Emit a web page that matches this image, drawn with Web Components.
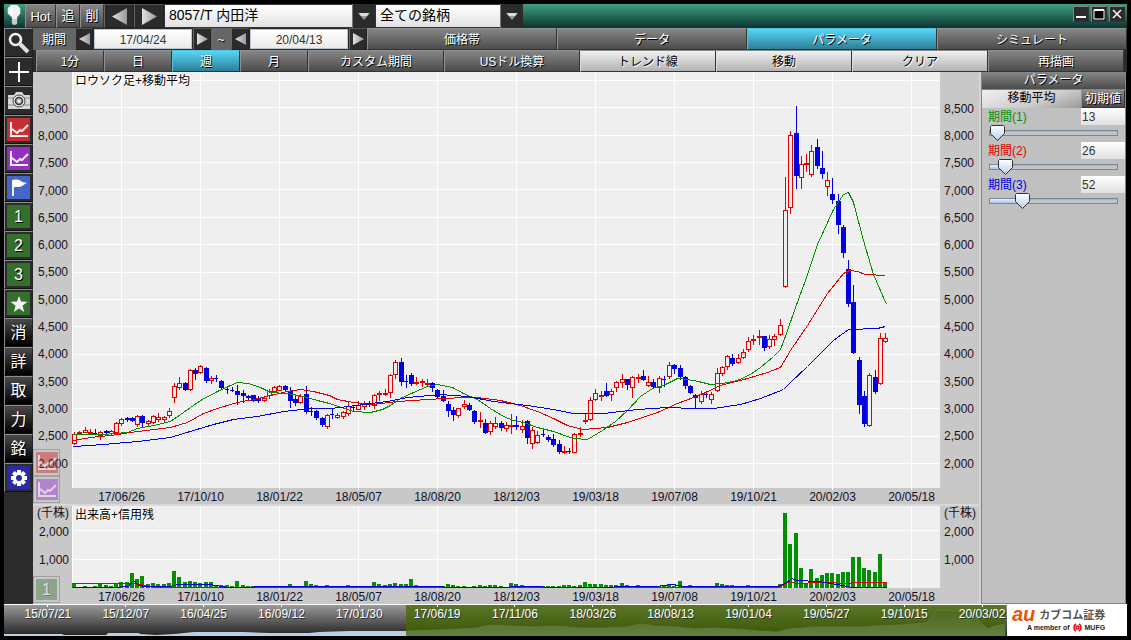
<!DOCTYPE html>
<html lang="ja">
<head>
<meta charset="utf-8">
<title>8057/T 内田洋</title>
<style>
  body {
    margin: 0;
    background: #000;
    font: 12px/16px "Liberation Sans", "Noto Sans CJK JP", sans-serif;
  }
</style>
</head>
<body>
<trade-app></trade-app>

<script>
// Small helper: every element gets an open shadow root with its own styles
const define = (name, render, setup) => {
  customElements.define(
    name,
    class extends HTMLElement {
      connectedCallback() {
        if (this.shadowRoot) return;
        this.attachShadow({ mode: "open" });
        this.shadowRoot.innerHTML = render(this);
        if (setup) setup(this, this.shadowRoot);
      }
    }
  );
};

const ICONS = {
  bulb: `<path d="M6 1h6l3 3v5l-3 4v2H7v-2L3 9V4z" fill="#f2f2ee"/><path d="M5 4l3-2v6l-2 2z" fill="#fff"/><path d="M7 15h5v3l-1 2H8l-1-2z" fill="#a9a9a4"/><path d="M7 16h5M7 18h5" stroke="#e6e6e0"/>`,
  search: `<circle cx="7.500" cy="7.500" r="5.500" fill="none" stroke="#f2f2f2" stroke-width="2.600"/><path d="M12 12l8 8" stroke="#ddd" stroke-width="4"/>`,
  plus: `<path d="M11 1v20M1 11h20" stroke="#fff" stroke-width="2"/>`,
  camera: `<path d="M0 5h6l2-3h6l2 3h6v14H0z" fill="#d8d8d8"/><path d="M0 8h22M0 15h22" stroke="#8a8a8a"/><circle cx="11" cy="11" r="6" fill="#eee" stroke="#444"/><circle cx="11" cy="11" r="3.500" fill="#bbb" stroke="#333" stroke-width="1.500"/><circle cx="11" cy="11" r="1.500" fill="#eee"/>`,
  chart: `<path d="M3 3v14h17" fill="none" stroke="#f4f0f0" stroke-width="2"/><path d="M4 10l5 4 3-3 2 1 6-6" fill="none" stroke="#f4f0f0" stroke-width="2"/>`,
  flag: `<path d="M5 3v16" stroke="#eee" stroke-width="2"/><path d="M5 3c4-1 8 0 9 2l5 1c-3 1-5 4-8 4H5z" fill="#fff"/>`,
  star: `<path d="M11 3l2 5.500 6.500.2-5 4 1.700 6.300L11 15.500 5.800 19l1.700-6.300-5-4 6.500-.2z" fill="#f2f2f2"/>`,
  gear: `<g stroke="#fff" stroke-width="4"><path d="M11 3v16M3 11h16M5.400 5.400l11.200 11.200M16.600 5.400L5.400 16.600"/></g><circle cx="11" cy="11" r="6" fill="#fff"/><circle cx="11" cy="11" r="3" fill="#2a2aa8"/>`,
};

// --- controls ---------------------------------------------------------

define("tool-button", (el) => {
  const icon = el.getAttribute("icon");
  return `
  <style>
    :host { display: block; width: 29px; height: 29px; box-sizing: border-box; }
    button {
      width: 100%; height: 100%; padding: 2px; box-sizing: border-box;
      display: flex; align-items: stretch; justify-content: stretch;
      background: #2b2b2b; color: #fff; cursor: pointer;
      border: 1px solid; border-color: #8d8d8d #222 #111 #8d8d8d;
      font: inherit; font-size: 16px;
    }
    span {
      flex: 1; display: flex; align-items: center; justify-content: center;
      background: var(--tile, transparent); text-shadow: 1px 1px #000;
    }
    :host([kanji]) button { background: linear-gradient(#4a4a4a, #000); }
    :host([ghost]) { width: 27px; height: 27px; opacity: .4; }
    :host([ghost]) button { background: #c8c8c8; border-color: #666; }
    svg { width: 22px; height: 22px; flex: none; }
  </style>
  <button type="button" aria-label="${el.getAttribute("label") || el.textContent}"><span>${
    icon ? `<svg viewBox="0 0 22 22" aria-hidden="true">${ICONS[icon]}</svg>` : "<slot></slot>"
  }</span></button>`;
});

define("bar-button", () => `
  <style>
    :host { display: flex; min-width: 0; }
    button {
      flex: 1; padding: 2px 0 0; min-width: 0; cursor: pointer; white-space: nowrap;
      background: linear-gradient(#868686, #4c4c4c); color: #fff;
      border: 1px solid; border-color: #919191 #333 #333 #919191;
      font: inherit; text-shadow: 1px 1px #000;
    }
    :host([active]) button { background: linear-gradient(#56d6f7, #2d7f96); border-color: #56c4e0 #333 #333 #56c4e0; }
    :host([light]) button { background: linear-gradient(#f0f0f0, #b2b2b2); color: #000; text-shadow: 1px 1px #fff; border-color: #888 #333 #333 #ddd; }
    :host([large]) button { font-size: 13px; }
    :host([flat]) button { padding: 0; }
  </style>
  <button type="button"><slot></slot></button>`);

define("arrow-button", (el) => {
  const right = el.getAttribute("dir") === "right";
  return `
  <style>
    :host { display: flex; width: 18px; }
    :host([large]) { width: 30px; }
    button { flex: 1; padding: 0; background: #2b2b2b; border: 1px solid; border-color: #555 #222 #222 #666; cursor: pointer; display: flex; align-items: center; justify-content: center; }
    svg { width: 11px; height: 12px; }
    :host([large]) svg { width: 15px; height: 17px; }
  </style>
  <button type="button" aria-label="${right ? "次へ" : "前へ"}">
    <svg viewBox="0 0 10 12" preserveAspectRatio="none" aria-hidden="true">
      <defs><linearGradient id="g"><stop stop-color="#e2e2e2"/><stop offset="1" stop-color="#999"/></linearGradient></defs>
      <path d="${right ? "M0 0l10 6-10 6z" : "M10 0L0 6l10 6z"}" fill="url(#g)"/>
    </svg>
  </button>`;
});

define("combo-box", (el) => `
  <style>
    :host { display: grid; }
    select, i { grid-area: 1 / 1; }
    select {
      appearance: none; width: 100%; margin: 0; padding: 0 24px 2px 4px; cursor: pointer;
      background: linear-gradient(#fff, #e2e2e2); color: #000; border: 1px solid #333; border-radius: 0;
      font: inherit; font-size: 14px;
    }
    i { justify-self: end; width: 23px; display: flex; align-items: center; justify-content: center; background: #2b2b2b; border-left: 1px solid #777; box-sizing: border-box; pointer-events: none; }
    svg { width: 12px; height: 7px; }
  </style>
  <select aria-label="${el.getAttribute("label")}"><option>${el.getAttribute("value")}</option></select>
  <i><svg viewBox="0 0 12 7" aria-hidden="true"><path d="M0 0h12L6 7z" fill="#999"/><path d="M1 0h10L9 3H3z" fill="#ddd"/></svg></i>`);

define("date-stepper", (el) => `
  <style>
    :host { display: flex; background: #2b2b2b; }
    input {
      width: 98px; box-sizing: border-box; margin: 1px; padding: 1px 0 0; text-align: center;
      font: inherit; color: #333; background: linear-gradient(#fff, #eaeaea);
      border: 1px solid; border-color: #fff #7d8ea3 #7d8ea3 #fff;
      outline: 1px solid #b8c4d0; outline-offset: -1px;
    }
  </style>
  <arrow-button dir="left"></arrow-button>
  <input type="text" aria-label="${el.getAttribute("label")}" value="${el.getAttribute("value")}">
  <arrow-button dir="right"></arrow-button>`);

define("window-controls", () => `
  <style>
    :host { display: flex; gap: 2px; padding: 2px 2px 0 0; align-items: flex-start; }
    button { width: 16px; height: 16px; padding: 0; background: #2b2b2b; border: 1px solid; border-color: #888 #333 #333 #888; display: flex; }
    svg { width: 14px; height: 14px; }
  </style>
  <button type="button" aria-label="最小化"><svg viewBox="0 0 14 14"><path d="M2 10h10" stroke="#fff" stroke-width="2"/></svg></button>
  <button type="button" aria-label="最大化"><svg viewBox="0 0 14 14"><path d="M2 3h10v9H2z" fill="#000" stroke="#fff"/><path d="M2 3h10" stroke="#fff" stroke-width="2"/></svg></button>
  <button type="button" aria-label="閉じる"><svg viewBox="0 0 14 14"><path d="M3 3l8 8M11 3l-8 8" stroke="#fff" stroke-width="1.500"/></svg></button>`);

define("period-slider", (el) => `
  <style>
    :host { display: grid; grid-template-columns: 1fr 44px; grid-template-rows: 17px 17px; }
    label { padding-left: 6px; color: var(--tone); line-height: 18px; }
    input { margin: 0; min-width: 0; box-sizing: border-box; }
    input[type=text] { border: 0; padding: 0 1px; font: inherit; color: #333; background: linear-gradient(#fff, #e0e0e0); }
    input[type=range] {
      appearance: none; grid-column: 1 / 3; width: 100%; height: 16px;
      background:
        linear-gradient(#e6f0fa, #a9c4e2) 8px 6px / var(--fill) 4px no-repeat,
        linear-gradient(#a8b4c0 1px, #c4c4c4 1px) center 6px / calc(100% - 16px) 4px no-repeat,
        linear-gradient(#74879b, #74879b) center 5px / calc(100% - 14px) 6px no-repeat;
    }
    input[type=range]::-webkit-slider-thumb {
      appearance: none; width: 15px; height: 16px;
      background: url("data:image/svg+xml,%3Csvg xmlns='http://www.w3.org/2000/svg' viewBox='0 0 15 16'%3E%3ClinearGradient id='g' x2='0' y2='1'%3E%3Cstop stop-color='%23fff'/%3E%3Cstop offset='1' stop-color='%23b4d0ec'/%3E%3C/linearGradient%3E%3Cpath d='M.5 1.500l1-1h12l1 1v7l-7 7-7-7z' fill='url(%23g)' stroke='%23333'/%3E%3C/svg%3E") no-repeat;
    }
  </style>
  <label for="n"><slot></slot></label>
  <input id="n" type="text">
  <input id="r" type="range" min="1" max="200" aria-label="スライダー">`,
(el, root) => {
  const text = root.getElementById("n");
  const range = root.getElementById("r");
  const sync = (v) => {
    text.value = v;
    range.value = v;
    range.style.setProperty("--fill", `${Math.round(v / 2)}%`);
  };
  el.style.setProperty("--tone", el.getAttribute("tone"));
  sync(el.getAttribute("value"));
  range.addEventListener("input", () => sync(range.value));
  text.addEventListener("change", () => sync(text.value));
});

// --- chart data, in plot units -----------------------------------------

// one week each: colour, high, body top, body bottom, low
const CANDLES = `r360 362 371 372,r359 360 361 362,r355 358 360 360,r357 360 361 361,b357 361 361 361,r359 360 363 367,b358 359 360 362,r358 359 361 362,r350 351 360 360,r346 347 351 353,
b345 346 347 349,b345 346 348 349,r343 344 352 354,b343 344 350 354,r348 349 351 353,r343 344 350 351,r341 345 347 349,r344 345 347 349,r336 339 343 345,r311 314 325 330,
r305 311 315 317,b310 311 317 318,r297 298 317 318,b296 298 301 307,r293 294 300 301,b295 296 308 310,r304 306 308 311,b303 306 306 309,b308 309 315 316,b314 317 317 321,
b315 318 318 319,b313 319 322 332,b318 321 323 330,b323 324 325 328,b323 323 328 329,b324 326 328 330,r324 326 328 329,r317 319 323 326,r314 315 319 320,r313 314 318 318,
b313 314 317 319,b315 319 328 335,b324 327 330 333,r322 324 330 331,b314 322 339 341,b335 339 339 343,b338 339 345 347,b345 346 352 354,r342 343 354 356,b336 342 342 346,
r341 343 345 346,r339 340 344 346,r329 334 341 343,b333 335 335 338,r329 333 337 337,r329 332 334 337,b329 331 332 334,r322 323 333 336,r319 321 322 328,r317 321 322 323,
r302 303 320 325,r288 290 302 306,b286 290 309 313,b303 309 309 315,b301 303 311 313,r305 310 311 312,r307 309 310 314,r307 311 312 313,b310 311 315 319,b317 318 324 326,
b318 324 328 329,b329 332 338 344,b335 338 342 348,r336 336 343 345,r328 332 334 336,b331 333 337 338,b338 339 349 351,r340 348 349 355,b347 351 360 361,r349 351 359 362,
r345 351 354 356,b349 351 355 358,r350 353 356 359,r342 353 354 361,b344 353 354 357,r348 354 357 360,b348 349 365 371,r355 358 371 376,r359 363 370 371,b356 362 362 364,
b363 365 367 369,b362 367 372 374,b368 372 379 381,r374 379 380 381,b376 379 379 381,r361 362 380 380,r355 361 362 364,r341 348 349 351,r325 328 347 348,r317 321 327 328,
r319 323 324 328,b311 319 323 324,r317 319 322 328,r309 310 315 319,r302 307 310 315,b307 307 312 317,r304 305 315 325,r302 305 306 310,b298 304 307 308,r304 310 313 314,
b307 310 314 316,r304 306 315 320,b304 307 307 314,r290 293 304 306,b292 293 296 301,b293 296 304 307,b304 305 313 316,b313 314 320 321,b322 323 325 335,r319 322 329 331,
b319 322 322 325,r320 322 327 331,r296 301 318 319,r294 295 301 303,r283 284 294 297,b282 286 291 293,r282 286 290 291,r277 280 285 286,r265 269 277 279,r263 267 268 272,
r258 264 265 272,b264 264 275 278,r263 267 274 276,r262 264 267 273,r247 253 262 263,r105 138 214 215,r59 63 135 141,b34 61 103 116,r84 92 105 116,r82 91 92 99,
r73 79 102 104,b67 75 93 96,b79 96 101 106,r100 108 114 123,b106 122 127 131,b122 129 152 161,b153 155 180 185,b188 197 231 234,b213 230 280 281,b285 288 332 341,
b319 324 351 354,r301 303 353 354,b298 305 319 321,r261 266 311 312,r261 266 269 270`
  .split(/,\s*/)
  .map((s) => [s[0], ...s.slice(1).split(" ").map(Number)]);

const AVERAGES = [
  ["#009000", "1,362 31,362 55,360 65,356 81,353 98,349 111,340 128,328 145,319 156,314 165,310 176,311 188,315 198,320 215,321 231,324 245,328 257,331 275,337 281,339 298,340 310,337 318,333 328,326 341,320 355,314 365,312 380,315 391,321 405,327 418,336 431,344 441,348 451,350 465,355 481,359 495,364 501,366 515,367 530,358 543,349 555,338 568,324 580,316 593,312 605,306 615,307 626,309 638,312 650,311 665,308 678,302 688,295 701,284 708,277 714,261 723,235 733,208 745,172 761,137 771,122 776,120 781,130 791,168 801,202 814,232"],
  ["#e00000", "1,368 18,365 38,363 65,359 98,355 115,350 131,341 148,335 165,330 181,327 198,323 215,319 228,317 241,319 257,323 265,327 281,330 301,332 325,329 355,327 391,325 405,325 428,328 448,333 465,339 481,346 495,353 510,357 535,355 555,350 585,340 605,331 621,325 631,321 648,313 675,306 695,300 708,295 718,278 735,253 755,221 771,201 777,198 785,199 793,202 813,203"],
  ["#0000e0", "1,374 31,372 65,369 98,365 121,358 141,352 161,347 185,344 211,339 238,336 257,336 268,335 291,332 315,329 335,325 368,322 395,324 421,329 455,333 481,337 501,341 531,341 565,337 595,335 621,336 641,336 668,332 688,326 711,317 718,310 735,294 761,268 776,257 805,256 813,254"],
];

const VOLUMES = [
  5, 1, 2, 1, 2, 4, 3, 2, 4, 6, 6, 15, 9, 12, 4, 5, 4, 4, 5, 17, 11, 6, 7, 6, 5, 6, 6, 3, 3, 3, 2, 7, 3, 2, 2, 1, 1, 2, 2, 2,
  2, 4, 2, 1, 7, 4, 3, 2, 3, 2, 2, 2, 3, 1, 2, 2, 2, 6, 4, 3, 4, 5, 4, 4, 9, 3, 2, 2, 1, 1, 2, 4, 3, 2, 2, 1, 2, 3, 2, 3,
  3, 2, 1, 5, 4, 3, 2, 1, 1, 2, 2, 2, 2, 3, 3, 2, 3, 6, 4, 4, 4, 3, 3, 3, 5, 3, 2, 3, 2, 2, 2, 2, 3, 4, 2, 7, 2, 3, 2, 1,
  2, 1, 5, 4, 3, 3, 2, 2, 3, 2, 2, 2, 2, 2, 4, 75, 44, 55, 20, 5, 19, 10, 13, 15, 15, 14, 16, 16, 31, 31, 20, 18, 16, 34, 6,
];

const CREDIT = [
  ["#e00000", "0,77 64,77 72,79 84,81 667,81 706,81 711,78 718,75 723,77 748,76 778,77 780,76 814,76"],
  ["#0000e0", "0,81 42,81 56,80 61,74 66,79 74,80 97,80 106,78 137,78 150,80 154,81 180,81 184,80 370,80 372,81 435,81 440,80 500,81 584,80 600,78 612,80 700,80 706,80 713,77 719,72 725,74 746,75 765,78 780,81 814,81"],
];

const weekX = (i) => 2 + Math.round((i * 79) / 15);
const rect = (x, y, w, h, fill) => `<rect x="${x}" y="${y}" width="${w}" height="${h}" fill="${fill}"/>`;
const lines = (list) =>
  list
    .map(([color, pts]) => `<polyline points="${pts}" transform="translate(.5 .5)" fill="none" stroke="${color}"/>`)
    .join("");

function gridLines(height, ys) {
  let out = rect(0, 0, 868, height, "#efefef") + rect(0, 0, 1, height, "#fff");
  for (let i = 0; i < 11; i++) out += rect(49 + i * 79, 0, 1, height, "#fff");
  return out + ys.map((y) => rect(0, y, 868, 1, "#fff")).join("");
}

function drawCandles() {
  const ys = Array.from({ length: 15 }, (_, i) => 391 - Math.round(i * 27.350));
  const body = CANDLES.map(([type, high, top, bottom, low], i) => {
    const x = weekX(i);
    const color = type === "r" ? "#e00000" : "#0000e0";
    const h = bottom - top + 1;
    let out = rect(x, high, 1, low - high + 1, color);
    out += rect(x - 2, top, type === "r" ? 5 : 4 + (h > 1), h, color);
    if (type === "r" && h > 2) out += rect(x - 1, top + 1, 3, h - 2, "#efefef");
    return out;
  }).join("");
  return gridLines(416, ys) + body + lines(AVERAGES);
}

function drawVolumes() {
  const bars = VOLUMES.map((v, i) => rect(weekX(i) - 2, 82 - v, 4, v, "#009000")).join("");
  return gridLines(82, [24, 53]) + bars + lines(CREDIT);
}

// --- chart pane: two price axes, a plot and the date axis ---------------

define("chart-pane", (el) => {
  const volume = el.hasAttribute("volume");
  const prices = volume ? ["(千株)", "2,000", "1,000"] : Array.from({ length: 14 }, (_, i) => (8500 - i * 500).toLocaleString("en-US"));
  const rows = volume ? "13fr 25fr 31fr 13fr" : "230fr repeat(14, 273fr) 108fr";
  const axis = (volume ? "" : "<b></b>") + prices.map((p) => `<span>${p}</span>`).join("");
  const dates = ["17/06/26", "17/10/10", "18/01/22", "18/05/07", "18/08/20", "18/12/03", "19/03/18", "19/07/08", "19/10/21", "20/02/03", "20/05/18"];
  return `
  <style>
    :host { position: relative; display: grid; grid-template: minmax(0, 1fr) 16px / 39px minmax(0, 1fr) 39px; background: #c8c8c8; color: #201018; min-height: 0; }
    .axis { display: grid; grid-template-rows: ${rows}; align-items: center; padding: 0 4px; white-space: nowrap; min-height: 0; }
    .axis span { height: 0; line-height: 0; }
    .left { justify-items: end; }
    .plot { display: grid; min-height: 0; overflow: hidden; }
    .plot > * { grid-area: 1 / 1; }
    svg { width: 100%; height: 100%; min-height: 0; shape-rendering: crispEdges; }
    h2 { margin: 0; padding-left: 3px; align-self: start; color: #000; font: inherit; line-height: 18px; text-shadow: 1px 1px #fff, -1px 0 #fff; z-index: 1; }
    .dates { grid-column: 1 / 4; display: grid; grid-template-columns: repeat(11, 1fr); padding: 0 28px 0 49px; text-align: center; line-height: 19px; color: #101028; }
    .dates span { background: linear-gradient(#fff, #fff) center top / 1px 2px no-repeat; height: 16px; }
    .tools { position: absolute; left: 0; bottom: 1px; }
    :host(:not([volume])) { border-bottom: 2px solid #d8d8d8; }
  </style>
  <div class="axis left">${axis}</div>
  <div class="plot">
    <svg viewBox="0 0 868 ${volume ? 82 : 416}" preserveAspectRatio="none" aria-hidden="true">${volume ? drawVolumes() : drawCandles()}</svg>
    <h2>${el.getAttribute("heading")}</h2>
  </div>
  <div class="axis">${axis}</div>
  <div class="dates">${dates.map((d) => `<span>${d}</span>`).join("")}</div>
  <div class="tools"><slot></slot></div>`;
});

// --- history strip under the charts -------------------------------------

define("history-strip", () => {
  const dates = ["15/07/21", "15/12/07", "16/04/25", "16/09/12", "17/01/30", "17/06/19", "17/11/06", "18/03/26", "18/08/13", "19/01/04", "19/05/27", "19/10/15", "20/03/02"];
  const history = "0,29 58,29 60,30 102,30 104,28 134,28 137,29 152,30 170,29 190,27 240,27 265,28 305,28 315,27 345,26 402,26";
  const selected = "402,26 435,25 473,23 480,21 492,20 506,21 530,22 552,21 576,23 602,23 623,22 638,19 649,21 673,22 690,24 711,23 730,24 756,26 773,27 784,24 810,22 860,22 870,21 896,20 922,18 928,12 933,5 953,6 970,9 976,18 984,24 991,21 1001,19";
  return `
  <style>
    :host { display: grid; overflow: hidden; background: linear-gradient(#9a9a9a, #222); border-top: 1px solid #fff; box-sizing: border-box; color: #fff; }
    svg, div { grid-area: 1 / 1; }
    svg { width: 100%; height: 31px; }
    div { display: grid; grid-template-columns: repeat(13, 1fr); margin-right: -14px; padding-left: 5px; text-align: center; line-height: 19px; z-index: 1; }
    span { background: linear-gradient(#fff, #fff) center top / 1px 2px no-repeat; text-shadow: 1px 1px #333; }
  </style>
  <svg viewBox="0 0 1003 31" preserveAspectRatio="none" aria-hidden="true">
    <defs><linearGradient id="sel" x2="0" y2="1"><stop stop-color="#5b7627"/><stop offset="1" stop-color="#3a5608"/></linearGradient>
    <linearGradient id="area" x2="0" y2="1"><stop stop-color="#4c681b"/><stop offset="1" stop-color="#638040"/></linearGradient></defs>
    <polygon points="${history} 402,31 0,31" fill="#b9cfe4"/>
    <rect x="402" y="0" width="600" height="31" fill="url(#sel)"/>
    <polygon points="${selected} 1001,31 402,31" fill="url(#area)"/>
    <polyline points="${selected}" fill="none" stroke="#6a8440" stroke-opacity=".6"/>
  </svg>
  <div>${dates.map((d) => `<span>${d}</span>`).join("")}</div>`;
});

define("broker-logo", () => `
  <style>
    :host { display: flex; flex-direction: column; justify-content: center; width: 120px; background: #fff; color: #555; }
    p { margin: 0; display: flex; align-items: center; white-space: nowrap; }
    .brand { padding-left: 5px; gap: 4px; font-size: 11px; line-height: 16px; height: 15px; font-weight: bold; }
    .brand em { color: #eb5505; font-size: 20px; font-style: italic; line-height: 14px; padding-bottom: 3px; }
    .group { padding-left: 20px; gap: 2px; font-size: 7px; line-height: 10px; font-weight: bold; color: #222; }
    svg { width: 11px; height: 9px; flex: none; }
  </style>
  <p class="brand"><em>au</em>カブコム証券</p>
  <p class="group">A member of
    <svg viewBox="0 0 11 9" aria-hidden="true"><path d="M4 1a4 4 0 0 0 0 7M7 1a4 4 0 0 1 0 7" fill="none" stroke="#e60012" stroke-width="1.500"/><circle cx="5.500" cy="4.500" r="1.500" fill="none" stroke="#e60012" stroke-width="1.500"/></svg>
    MUFG</p>`);

// --- page ----------------------------------------------------------------

define("trade-app", () => `
  <style>
    :host { display: grid; grid-template: 24px 22px 22px minmax(0, 1fr) 32px / 29px minmax(0, 1fr) 146px; height: 100vh; box-sizing: border-box; padding: 4px; background: #000; }
    header { grid-column: 1 / 4; display: flex; background: linear-gradient(#3f9f80, #0c3430); }
    .bulb { width: 21px; display: flex; }
    .bulb svg { width: 20px; height: 22px; }
    .hot { width: 31px; }
    .act { width: 24px; }
    .stock { width: 211px; }
    .group { width: 148px; }
    window-controls { margin-left: auto; }
    .side { grid-row: 2 / 5; background: #2b2b2b; }
    .bar { grid-column: 2 / 4; display: flex; background: #2b2b2b; }
    .bar bar-button { flex: 1 1 0; }
    .bar bar-button[wide] { flex-grow: 2; }
    .cap, .to { background: #666; color: #fff; text-align: center; line-height: 24px; height: 22px; text-shadow: 1px 1px #000; }
    .cap { width: 42px; }
    .to { width: 20px; }
    .cycle { padding: 0 3px; }
    .stage { display: flex; flex-direction: column; border-right: 2px solid #d4d4d4; min-height: 0; }
    .price { flex: 416 1 16px; }
    .volume { flex: 82 1 16px; }
    aside { background: #c0c0c0; border: 1px solid #74879b; border-top: 0; margin-right: 1px; display: flex; flex-direction: column; }
    h1, h3 { margin: 0; font: inherit; line-height: 17px; text-align: center; color: #fff; text-shadow: 1px 1px #000; background: linear-gradient(#868686, #4c4c4c); }
    h1 { border-bottom: 1px solid #74879b; }
    .head { display: grid; grid-template-columns: 1fr 44px; height: 17px; margin-bottom: 1px; }
    h3 { background: linear-gradient(160deg, #f0f0f0, #ccc 60%, #999); color: #000; text-shadow: none; }
    footer { grid-column: 1 / 4; display: flex; min-width: 0; }
    history-strip { flex: 1; min-width: 0; }
  </style>
  <header>
    <span class="bulb"><svg viewBox="0 0 18 21" aria-hidden="true">${ICONS.bulb}</svg></span>
    <bar-button class="hot" large>Hot</bar-button>
    <bar-button class="act" large flat>追</bar-button>
    <bar-button class="act" large flat>削</bar-button>
    <arrow-button dir="left" large></arrow-button>
    <arrow-button dir="right" large></arrow-button>
    <combo-box class="stock" label="銘柄" value="8057/T 内田洋"></combo-box>
    <combo-box class="group" label="グループ" value="全ての銘柄"></combo-box>
    <window-controls></window-controls>
  </header>

  <div class="side">
    <tool-button icon="search" label="検索"></tool-button>
    <tool-button icon="plus" label="十字線"></tool-button>
    <tool-button icon="camera" label="画像保存"></tool-button>
    <tool-button icon="chart" label="チャート" style="--tile:#c82f32"></tool-button>
    <tool-button icon="chart" label="比較" style="--tile:#9230c4"></tool-button>
    <tool-button icon="flag" label="フラグ" style="--tile:#4565c8"></tool-button>
    <tool-button style="--tile:#34702c">1</tool-button>
    <tool-button style="--tile:#34702c">2</tool-button>
    <tool-button style="--tile:#34702c">3</tool-button>
    <tool-button icon="star" label="お気に入り" style="--tile:#34702c"></tool-button>
    <tool-button kanji>消</tool-button>
    <tool-button kanji>詳</tool-button>
    <tool-button kanji>取</tool-button>
    <tool-button kanji>力</tool-button>
    <tool-button kanji>銘</tool-button>
    <tool-button icon="gear" label="設定" style="--tile:#2a2aa8"></tool-button>
  </div>

  <div class="bar">
    <span class="cap">期間</span>
    <date-stepper label="開始日" value="17/04/24"></date-stepper>
    <span class="to">~</span>
    <date-stepper label="終了日" value="20/04/13"></date-stepper>
    <bar-button>価格帯</bar-button>
    <bar-button>データ</bar-button>
    <bar-button active>パラメータ</bar-button>
    <bar-button>シミュレート</bar-button>
  </div>

  <div class="bar cycle">
    <bar-button>1分</bar-button>
    <bar-button>日</bar-button>
    <bar-button active>週</bar-button>
    <bar-button>月</bar-button>
    <bar-button wide>カスタム期間</bar-button>
    <bar-button wide>USドル換算</bar-button>
    <bar-button wide light>トレンド線</bar-button>
    <bar-button wide light>移動</bar-button>
    <bar-button wide light>クリア</bar-button>
    <bar-button wide>再描画</bar-button>
  </div>

  <div class="stage">
    <chart-pane class="price" heading="ロウソク足+移動平均">
      <tool-button ghost icon="chart" label="チャート" style="--tile:#d01010"></tool-button>
      <tool-button ghost icon="chart" label="比較" style="--tile:#9020d0"></tool-button>
    </chart-pane>
    <chart-pane class="volume" volume heading="出来高+信用残">
      <tool-button ghost style="--tile:#34702c">1</tool-button>
    </chart-pane>
  </div>

  <aside>
    <h1>パラメータ</h1>
    <div class="head"><h3>移動平均</h3><bar-button flat>初期値</bar-button></div>
    <period-slider tone="#009000" value="13">期間(1)</period-slider>
    <period-slider tone="#e00000" value="26">期間(2)</period-slider>
    <period-slider tone="#0000e0" value="52">期間(3)</period-slider>
  </aside>

  <footer>
    <history-strip></history-strip>
    <broker-logo></broker-logo>
  </footer>`);
</script>
</body>
</html>
